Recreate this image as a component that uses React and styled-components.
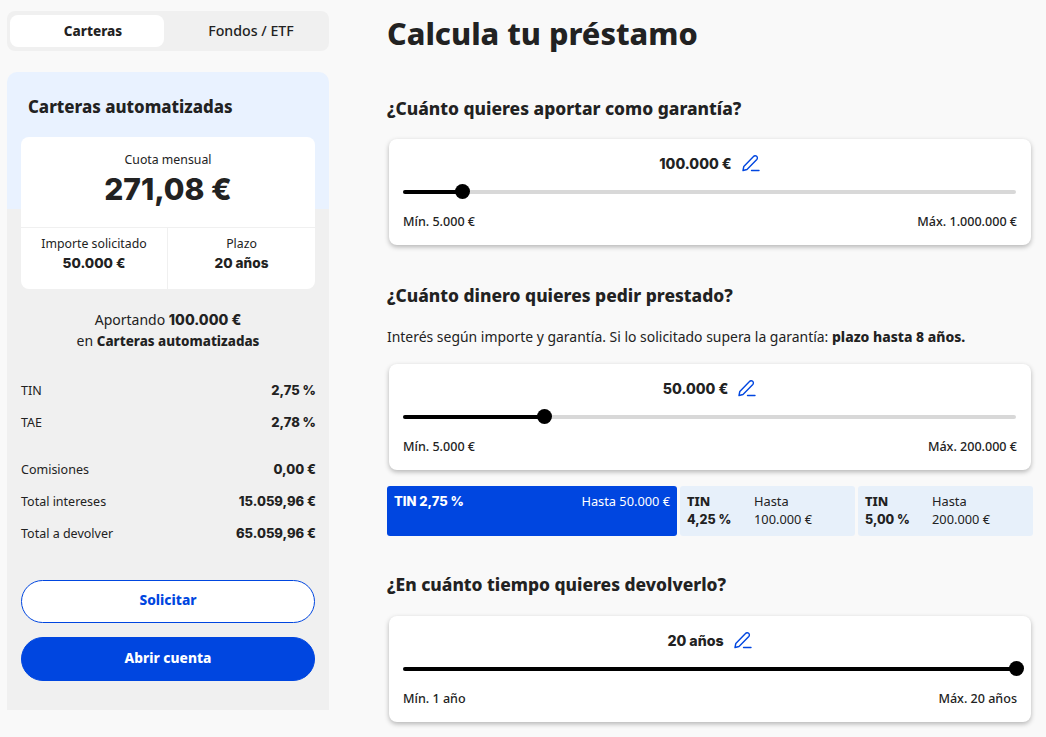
import styled, { createGlobalStyle } from 'styled-components';

const GlobalStyle = createGlobalStyle`
  html, body {
    margin: 0;
    height: 737px;
    overflow: hidden;
    background: #f9f9f9;
    color: #222;
    font-family: "Noto Sans", "Lato", sans-serif;
  }
  * { box-sizing: border-box; }
`;

const Page = styled.div`
  display: flex;
  align-items: flex-start;
  padding: 11px 13px 0 7px;
`;

const Sidebar = styled.aside`
  width: 322px;
  flex: none;
  margin-right: 58px;
`;

const Tabs = styled.div`
  display: flex;
  height: 40px;
  padding: 4px 3px;
  background: #f0f0f0;
  border-radius: 8px;
  margin-bottom: 21px;
`;

const Tab = styled.div`
  flex: ${(props) => (props.$active ? '0 0 154px' : 1)};
  display: flex;
  align-items: center;
  justify-content: center;
  padding: ${(props) => (props.$active ? '0 0 0 12px' : '0 0 2px 12px')};
  font-size: ${(props) => (props.$active ? 13.5 : 14.2)}px;
  font-weight: ${(props) => (props.$active ? 800 : 500)};
  background: ${(props) => (props.$active ? '#fff' : 'transparent')};
  border-radius: 8px;
`;

const Panel = styled.section`
  height: 638px;
  padding: 0 14px;
  border-radius: 10px 10px 0 0;
  background: linear-gradient(#e9f2ff 137px, #f0f0f0 137px);
`;

const PanelTitle = styled.h2`
  margin: 0;
  padding: 24px 7px 0;
  height: 65px;
  font-size: 16.85px;
  line-height: 22px;
  font-weight: 800;
`;

const QuotaCard = styled.div`
  background: #fff;
  border-radius: 8px;
  height: 152px;
`;

const QuotaTop = styled.div`
  height: 91px;
  padding-top: 15px;
  text-align: center;
  border-bottom: 1px solid #f0f0f0;
`;

const QuotaLabel = styled.div`
  font-size: 12.3px;
  line-height: 16px;
`;

const Num = styled.b`
  font-family: "Inter", "Noto Sans", sans-serif;
  font-size: ${(props) => props.$size || 13}px;
  font-weight: 800;
`;

const QuotaValue = styled.div`
  padding-top: 1px;
  line-height: 40px;
`;

const QuotaBottom = styled.div`
  display: grid;
  grid-template-columns: 146px 1fr;
  height: 61px;
`;

const QuotaCell = styled.div`
  padding-top: 8px;
  text-align: center;
  font-size: 12.3px;
  line-height: 16px;
  border-left: ${(props) => (props.$divided ? '1px solid #f0f0f0' : 'none')};

  b {
    display: block;
    margin-top: 3px;
    line-height: 16px;
  }
`;

const Contribution = styled.p`
  margin: 0;
  padding-top: 20px;
  height: 85px;
  text-align: center;
  font-size: 14px;
  line-height: 21px;
`;

const Strong = styled.b`
  font-weight: 800;
  font-size: 13.4px;
`;

const InfoGroup = styled.div`
  margin-top: ${(props) => props.$gap || 0}px;
`;

const InfoRow = styled.div`
  display: flex;
  justify-content: space-between;
  align-items: center;
  height: 32px;
  margin-right: -1px;
  font-size: 12.5px;
`;

const Actions = styled.div`
  display: flex;
  flex-direction: column;
  gap: 14px;
  margin-top: 31px;
`;

const ActionButton = styled.button`
  height: ${(props) => (props.$filled ? 44 : 43)}px;
  padding: 0 0 4px;
  border-radius: 22px;
  border: 1px solid #0046e0;
  background: ${(props) => (props.$filled ? '#0046e0' : '#fff')};
  color: ${(props) => (props.$filled ? '#fff' : '#0046e0')};
  font-family: inherit;
  font-size: 13.7px;
  font-weight: 800;
`;

const Main = styled.main`
  flex: 1;
  min-width: 0;
`;

const Title = styled.h1`
  margin: 0;
  height: 47px;
  font-size: 30.6px;
  line-height: 45px;
  font-weight: 800;
`;

const Question = styled.h2`
  margin: ${(props) => props.$top}px 0 0;
  font-size: 17.4px;
  line-height: 23px;
  font-weight: 800;
`;

const Hint = styled.p`
  margin: 20px 0 0;
  font-size: 13.95px;
  line-height: 20px;

  b { font-weight: 800; }
`;

const SliderCard = styled.div`
  margin: ${(props) => props.$top}px 2px 0;
  height: 106px;
  padding: 13px 15px 0 14px;
  background: #fff;
  border-radius: 8px;
  box-shadow: 0 2px 5px rgba(0, 0, 0, 0.28);
`;

const ValueRow = styled.div`
  display: flex;
  justify-content: center;
  align-items: center;
  gap: 10px;
  height: 22px;

  svg { color: #0046e0; }
`;

const Track = styled.div`
  position: relative;
  height: 4px;
  margin-top: 16px;
  background: #d8d8d8;
  border-radius: 2px;
`;

const TrackFill = styled.div`
  height: 100%;
  background: #000;
  border-radius: 2px;
`;

const Thumb = styled.div`
  position: absolute;
  top: -6px;
  width: 15px;
  height: 15px;
  margin-left: -7px;
  border-radius: 50%;
  background: #000;
`;

const Limits = styled.div`
  display: flex;
  justify-content: space-between;
  margin: 20px -1px 0 0;
  font-size: 12.55px;
  line-height: 16px;
  font-weight: 500;
`;

const Tiers = styled.div`
  display: grid;
  grid-template-columns: 290px 1fr 1fr;
  gap: 3px;
  margin-top: 16px;
  height: 50px;
`;

const Tier = styled.div`
  display: flex;
  justify-content: ${(props) => (props.$active ? 'space-between' : 'flex-start')};
  padding: 6px 7px 0;
  border-radius: 3px;
  font-size: 12.8px;
  line-height: 18px;
  background: ${(props) => (props.$active ? '#0046e0' : '#e7f0fa')};
  color: ${(props) => (props.$active ? '#fff' : '#222')};
`;

const TierRate = styled.div`
  width: 67px;
  font-weight: 800;
`;

const Pencil = () => (
  <svg width="18" height="18" viewBox="0 0 18 18" fill="none" stroke="currentColor" strokeWidth="1.4" strokeLinejoin="round" strokeLinecap="round">
    <path d="M1 16.5 L1.8 12.5 L11.5 2.5 a2 2 0 0 1 3.3 3 L5 15.5 Z" />
    <path d="M9.5 16.5 H17" />
  </svg>
);

const Slider = ({ top, value, percent, min, max }) => (
  <SliderCard $top={top}>
    <ValueRow><Num $size={14.2}>{value}</Num> <Pencil /></ValueRow>
    <Track>
      <TrackFill style={{ width: `${percent}%` }} />
      <Thumb style={{ left: `${percent}%` }} />
    </Track>
    <Limits><span>{min}</span><span>{max}</span></Limits>
  </SliderCard>
);

const App = () => (
  <Page>
    <GlobalStyle />
    <Sidebar>
      <Tabs>
        <Tab $active>Carteras</Tab>
        <Tab>Fondos / ETF</Tab>
      </Tabs>
      <Panel>
        <PanelTitle>Carteras automatizadas</PanelTitle>
        <QuotaCard>
          <QuotaTop>
            <QuotaLabel>Cuota mensual</QuotaLabel>
            <QuotaValue><Num $size={30}>271,08 €</Num></QuotaValue>
          </QuotaTop>
          <QuotaBottom>
            <QuotaCell>Importe solicitado<Num $size={13.6}>50.000 €</Num></QuotaCell>
            <QuotaCell $divided>Plazo<Num $size={13.6}>20 años</Num></QuotaCell>
          </QuotaBottom>
        </QuotaCard>
        <Contribution>
          Aportando <Num $size={14.2}>100.000 €</Num><br />en <Strong>Carteras automatizadas</Strong>
        </Contribution>
        <InfoGroup>
          <InfoRow><span>TIN</span><Num>2,75 %</Num></InfoRow>
          <InfoRow><span>TAE</span><Num>2,78 %</Num></InfoRow>
        </InfoGroup>
        <InfoGroup $gap={15}>
          <InfoRow><span>Comisiones</span><Num>0,00 €</Num></InfoRow>
          <InfoRow><span>Total intereses</span><Num>15.059,96 €</Num></InfoRow>
          <InfoRow><span>Total a devolver</span><Num>65.059,96 €</Num></InfoRow>
        </InfoGroup>
        <Actions>
          <ActionButton>Solicitar</ActionButton>
          <ActionButton $filled>Abrir cuenta</ActionButton>
        </Actions>
      </Panel>
    </Sidebar>
    <Main>
      <Title>Calcula tu préstamo</Title>
      <Question $top={39}>¿Cuánto quieres aportar como garantía?</Question>
      <Slider top={19} value="100.000 €" percent={9.55} min="Mín. 5.000 €" max="Máx. 1.000.000 €" />
      <Question $top={39}>¿Cuánto dinero quieres pedir prestado?</Question>
      <Hint>Interés según importe y garantía. Si lo solicitado supera la garantía: <b>plazo hasta 8 años.</b></Hint>
      <Slider top={17} value="50.000 €" percent={23.08} min="Mín. 5.000 €" max="Máx. 200.000 €" />
      <Tiers>
        <Tier $active><Num>TIN 2,75 %</Num><span>Hasta 50.000 €</span></Tier>
        <Tier><TierRate>TIN<br /><Num $size={12.5}>4,25 %</Num></TierRate><span>Hasta<br />100.000 €</span></Tier>
        <Tier><TierRate>TIN<br /><Num $size={12.5}>5,00 %</Num></TierRate><span>Hasta<br />200.000 €</span></Tier>
      </Tiers>
      <Question $top={37}>¿En cuánto tiempo quieres devolverlo?</Question>
      <Slider top={20} value="20 años" percent={100} min="Mín. 1 año" max="Máx. 20 años" />
    </Main>
  </Page>
);

export default App;
